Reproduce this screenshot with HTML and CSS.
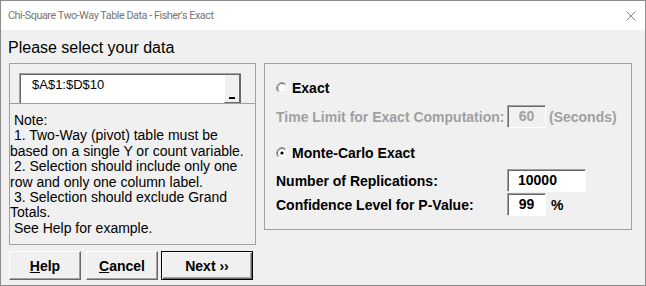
FILE: index.html
```html
<!DOCTYPE html>
<html lang="en">
<head>
    <meta charset="UTF-8">
    <meta name="viewport" content="width=device-width, initial-scale=1.0">
    <title>Chi-Square Two-Way Table Data - Fisher's Exact</title>
    <link rel="stylesheet" href="styles.css">
</head>
<body>
    <div class="window">
        <div class="titlebar">
            <span class="title">Chi-Square Two-Way Table Data - Fisher's Exact</span>
            <svg class="close" width="10" height="10" viewBox="0 0 10 10">
                <path d="M0.5 0.5L9.5 9.5M9.5 0.5L0.5 9.5" stroke="#8a8a8a" stroke-width="1" fill="none"/>
            </svg>
        </div>
        <div class="client">
            <div class="heading">Please select your data</div>
            <div class="panels">
                <div class="left">
                    <div class="frame-left">
                        <div class="ref-row">
                            <div class="ref-input">
                                <span class="ref-text">$A$1:$D$10</span>
                                <span class="ref-btn"><span class="ref-bar"></span></span>
                            </div>
                        </div>
                        <div class="note">
                            <span class="line"> Note:</span>
                            <span class="line"> 1. Two-Way (pivot) table must be</span>
                            <span class="line">based on a single Y or count variable.</span>
                            <span class="line"> 2. Selection should include only one</span>
                            <span class="line">row and only one column label.</span>
                            <span class="line"> 3. Selection should exclude Grand</span>
                            <span class="line">Totals.</span>
                            <span class="line"> See Help for example.</span>
                        </div>
                    </div>
                    <div class="buttons">
                        <button class="btn btn-help" type="button"><u>H</u>elp</button>
                        <button class="btn btn-cancel" type="button"><u>C</u>ancel</button>
                        <button class="btn btn-next" type="button">Next &rsaquo;&rsaquo;</button>
                    </div>
                </div>
                <div class="frame-right">
                    <div class="row row-exact">
                        <svg class="radio" width="12" height="12" viewBox="0 0 12 12">
                            <circle cx="6" cy="6" r="4.5" fill="#fff"/>
                            <path d="M2.11 9.89A5.5 5.5 0 0 1 9.89 2.11" stroke="#a0a0a0" fill="none"/>
                            <path d="M2.82 9.18A4.5 4.5 0 0 1 9.18 2.82" stroke="#696969" fill="none"/>
                            <path d="M9.89 2.11A5.5 5.5 0 0 1 2.11 9.89" stroke="#fff" fill="none"/>
                            <path d="M9.18 2.82A4.5 4.5 0 0 1 2.82 9.18" stroke="#e3e3e3" fill="none"/>
                        </svg>
                        <span class="opt">Exact</span>
                    </div>
                    <div class="row row-time">
                        <span class="field-label disabled">Time Limit for Exact Computation:</span>
                        <span class="box box-small disabled-box">60</span>
                        <span class="suffix disabled">(Seconds)</span>
                    </div>
                    <div class="row row-monte">
                        <svg class="radio" width="12" height="12" viewBox="0 0 12 12">
                            <circle cx="6" cy="6" r="4.5" fill="#fff"/>
                            <path d="M2.11 9.89A5.5 5.5 0 0 1 9.89 2.11" stroke="#a0a0a0" fill="none"/>
                            <path d="M2.82 9.18A4.5 4.5 0 0 1 9.18 2.82" stroke="#696969" fill="none"/>
                            <path d="M9.89 2.11A5.5 5.5 0 0 1 2.11 9.89" stroke="#fff" fill="none"/>
                            <path d="M9.18 2.82A4.5 4.5 0 0 1 2.82 9.18" stroke="#e3e3e3" fill="none"/>
                            <circle cx="6" cy="6" r="1.6" fill="#000"/>
                        </svg>
                        <span class="opt">Monte-Carlo Exact</span>
                    </div>
                    <div class="row row-reps">
                        <span class="field-label">Number of Replications:</span>
                        <span class="box box-wide">10000</span>
                    </div>
                    <div class="row row-conf">
                        <span class="field-label">Confidence Level for P-Value:</span>
                        <span class="box box-small">99</span>
                        <span class="suffix pct">%</span>
                    </div>
                </div>
            </div>
        </div>
    </div>
</body>
</html>
```
FILE: styles.css
```css
*{
    box-sizing: border-box;
    margin: 0;
    padding: 0;
}
body{
    width: 646px;
    height: 286px;
    font-family: "Liberation Sans", Arial, sans-serif;
    background: #f0f0f0;
}
.window{
    width: 646px;
    height: 286px;
    border: 1px solid #8c8c8c;
    background: #f0f0f0;
    display: flex;
    flex-direction: column;
}
.titlebar{
    height: 29px;
    background: #fff;
    display: flex;
    align-items: center;
    justify-content: space-between;
    padding: 0 9px 0 7px;
}
.title{
    font-family: Roboto, "Liberation Sans", sans-serif;
    font-size: 10.8px;
    letter-spacing: -0.45px;
    color: #767676;
}
.client{
    flex: 1;
    padding: 10px 0 0 8px;
}
.heading{
    font-size: 16px;
    line-height: 16px;
    color: #000;
    margin-left: -1px;
}
.panels{
    display: flex;
    gap: 8px;
    margin-top: 7px;
}
.left{
    width: 247px;
    display: flex;
    flex-direction: column;
    gap: 6px;
}
.frame-left{
    height: 182px;
    border: 1px solid #a0a0a0;
    display: flex;
    flex-direction: column;
}
.ref-row{
    height: 39px;
    padding: 9px 0 0 9px;
}
.ref-input{
    width: 222px;
    height: 30px;
    display: flex;
    background: #fff;
    border-top: 1px solid #a0a0a0;
    border-left: 1px solid #a0a0a0;
    box-shadow: inset 1px 1px 0 #696969;
}
.ref-text{
    flex: 1;
    font-size: 13px;
    line-height: 15px;
    padding: 3px 0 0 12px;
}
.ref-btn{
    width: 17px;
    margin-top: 1px;
    background: #f0f0f0;
    border-left: 1px solid #fff;
    border-right: 2px solid #696969;
    border-bottom: 1px solid #696969;
    display: flex;
    align-items: flex-end;
    justify-content: center;
    padding-bottom: 3px;
}
.ref-bar{
    width: 6px;
    height: 2px;
    background: #000;
}
.note{
    flex: 1;
    border-top: 1px solid #a0a0a0;
    padding-top: 9px;
    font-size: 14px;
    line-height: 15.4px;
    color: #000;
}
.line{
    display: block;
    white-space: pre;
}
.buttons{
    display: flex;
    height: 29px;
}
.btn{
    height: 29px;
    font-family: "Liberation Sans", Arial, sans-serif;
    font-size: 14px;
    font-weight: bold;
    color: #000;
    background: #f0f0f0;
    border: 1px solid;
    border-color: #fff #696969 #696969 #fff;
    box-shadow: inset -1px -1px 0 #a0a0a0;
}
.btn-help{
    width: 72px;
}
.btn-cancel{
    width: 72px;
    margin-left: 5px;
}
.btn-next{
    width: 92px;
    margin-left: 3px;
    border: 1px solid #000;
    box-shadow: inset 1px 1px 0 #fff, inset -1px -1px 0 #696969, inset -2px -2px 0 #a0a0a0;
}
.frame-right{
    width: 368px;
    height: 167px;
    border: 1px solid #a0a0a0;
    padding: 16px 0 0 11px;
}
.row{
    display: flex;
    align-items: center;
    font-size: 14px;
    font-weight: bold;
    white-space: nowrap;
}
.row-exact, .row-monte{
    height: 16px;
}
.row-time{
    height: 23px;
    margin-top: 9px;
}
.row-monte{
    margin-top: 17px;
}
.row-reps{
    height: 23px;
    margin-top: 8px;
}
.row-conf{
    height: 23px;
    margin-top: 1px;
}
.radio{
    margin-right: 4px;
    flex: none;
}
.field-label{
    width: 231px;
}
.disabled{
    color: #a0a0a0;
}
.box{
    height: 23px;
    background: #fff;
    border-top: 1px solid #a0a0a0;
    border-left: 1px solid #a0a0a0;
    border-right: 1px solid #fff;
    border-bottom: 1px solid #fff;
    box-shadow: inset 1px 1px 0 #696969;
    line-height: 21px;
}
.box-small{
    width: 39px;
    text-align: center;
}
.box-wide{
    width: 79px;
    padding-left: 10px;
}
.disabled-box{
    background: #f0f0f0;
    color: #a0a0a0;
}
.suffix{
    margin-left: 3px;
}
.pct{
    margin-left: 5px;
}
```
